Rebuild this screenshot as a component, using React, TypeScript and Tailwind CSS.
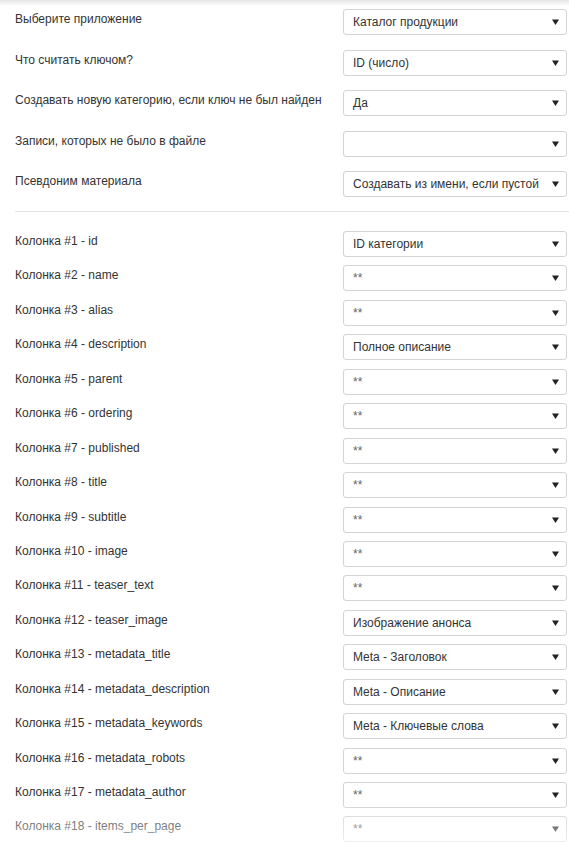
const topRows: { label: string; value: string }[] = [
  { label: "Выберите приложение", value: "Каталог продукции" },
  { label: "Что считать ключом?", value: "ID (число)" },
  { label: "Создавать новую категорию, если ключ не был найден", value: "Да" },
  { label: "Записи, которых не было в файле", value: "" },
  { label: "Псевдоним материала", value: "Создавать из имени, если пустой" },
];

const columns: { name: string; value: string }[] = [
  { name: "id", value: "ID категории" },
  { name: "name", value: "**" },
  { name: "alias", value: "**" },
  { name: "description", value: "Полное описание" },
  { name: "parent", value: "**" },
  { name: "ordering", value: "**" },
  { name: "published", value: "**" },
  { name: "title", value: "**" },
  { name: "subtitle", value: "**" },
  { name: "image", value: "**" },
  { name: "teaser_text", value: "**" },
  { name: "teaser_image", value: "Изображение анонса" },
  { name: "metadata_title", value: "Meta - Заголовок" },
  { name: "metadata_description", value: "Meta - Описание" },
  { name: "metadata_keywords", value: "Meta - Ключевые слова" },
  { name: "metadata_robots", value: "**" },
  { name: "metadata_author", value: "**" },
  { name: "items_per_page", value: "**" },
];

function Select({ value }: { value: string }) {
  const empty = value === "**";
  return (
    <div className="flex h-[26px] w-[224px] shrink-0 items-center justify-between rounded-[3px] border border-[#d4d4d4] bg-white pl-[9px] pr-[7px]">
      <span className={empty ? "text-[#666]" : "text-[#333]"}>{value}</span>
      <svg width="7" height="6" viewBox="0 0 7 6" className="shrink-0">
        <path d="M0 0.5 L7 0.5 L3.5 6 Z" fill="#222" />
      </svg>
    </div>
  );
}

function Row({ label, value }: { label: string; value: string }) {
  return (
    <div className="flex items-start justify-between">
      <span className="mt-[3px] leading-[15px] text-[#333]">{label}</span>
      <Select value={value} />
    </div>
  );
}

export default function App() {
  return (
    <div
      className="relative min-h-[842px] w-[569px] overflow-hidden bg-white text-[12px]"
      style={{ fontFamily: '"Liberation Sans", Arial, sans-serif' }}
    >
      {/* top shadow */}
      <div className="pointer-events-none absolute left-0 top-0 h-[6px] w-full bg-gradient-to-b from-black/10 to-transparent" />

      <div className="pl-[15px] pr-[2px] pt-[9px]">
        <div className="flex flex-col gap-[14.5px]">
          {topRows.map((r) => (
            <Row key={r.label} label={r.label} value={r.value} />
          ))}
        </div>

        <div className="mt-[14px] h-px bg-[#e3e3e3] -mr-[2px]" />

        <div className="mt-[19px] flex flex-col gap-[8.45px]">
          {columns.map((c, i) => (
            <Row key={c.name} label={`Колонка #${i + 1} - ${c.name}`} value={c.value} />
          ))}
        </div>
      </div>

      {/* bottom fade */}
      <div className="pointer-events-none absolute bottom-0 left-0 h-[40px] w-full bg-gradient-to-b from-white/0 to-white/60" />
    </div>
  );
}
